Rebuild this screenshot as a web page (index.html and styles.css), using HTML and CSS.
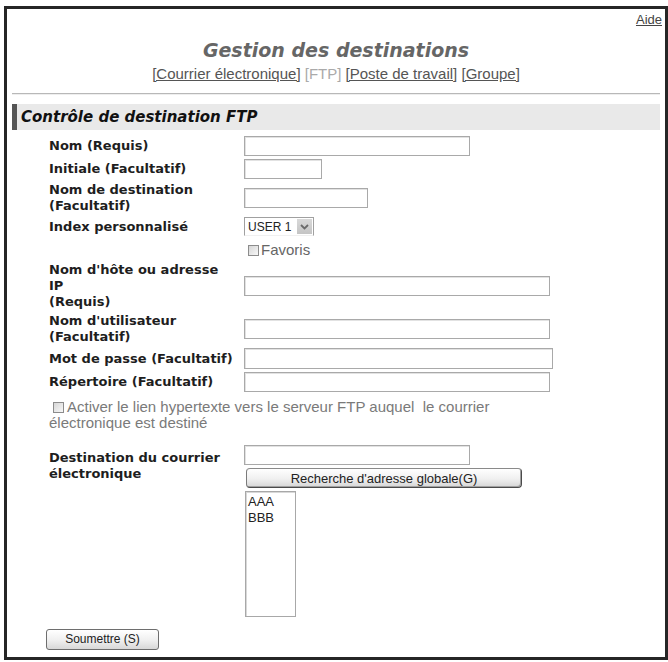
FILE: index.html
```html
<!DOCTYPE html>
<html lang="fr">
<head>
<meta charset="utf-8">
<title>Gestion des destinations</title>
<link rel="stylesheet" href="styles.css">
</head>
<body>
<div class="frame">
  <div class="help"><a href="#">Aide</a></div>
  <h1 class="title">Gestion des destinations</h1>
  <nav class="tabs">
    <a href="#">[Courrier électronique]</a> <span class="current">[FTP]</span> <a href="#">[Poste de travail]</a> <a href="#">[Groupe]</a>
  </nav>
  <hr class="rule">
  <h2 class="section">Contrôle de destination FTP</h2>
  <form class="form">
    <div class="grid">
      <label class="lbl">Nom (Requis)</label>
      <div class="ctl"><input type="text" class="field w226"></div>

      <label class="lbl">Initiale (Facultatif)</label>
      <div class="ctl"><input type="text" class="field w78"></div>

      <label class="lbl">Nom de destination<br>(Facultatif)</label>
      <div class="ctl"><input type="text" class="field w124"></div>

      <label class="lbl">Index personnalisé</label>
      <div class="ctl">
        <span class="select"><span class="select-val">USER 1</span><span class="select-btn"><svg width="9" height="6" viewBox="0 0 9 6"><path d="M1 1 L4.5 4.5 L8 1" fill="none" stroke="#6a6a6a" stroke-width="1.8"/></svg></span></span>
      </div>

      <div class="lbl"></div>
      <div class="ctl fav"><input type="checkbox" class="chk"><span class="light">Favoris</span></div>

      <label class="lbl">Nom d'hôte ou adresse<br>IP<br>(Requis)</label>
      <div class="ctl"><input type="text" class="field w306"></div>

      <label class="lbl">Nom d'utilisateur<br>(Facultatif)</label>
      <div class="ctl"><input type="text" class="field w306"></div>

      <label class="lbl">Mot de passe (Facultatif)</label>
      <div class="ctl"><input type="password" class="field w309 h21"></div>

      <label class="lbl">Répertoire (Facultatif)</label>
      <div class="ctl"><input type="text" class="field w306"></div>

      <p class="link-opt"><input type="checkbox" class="chk"><span>Activer le lien hypertexte vers le serveur FTP auquel&nbsp; le courrier électronique est destiné</span></p>

      <label class="lbl lbl-top">Destination du courrier<br>électronique</label>
      <div class="ctl stack">
        <input type="text" class="field w226">
        <button type="button" class="btn-search">Recherche d'adresse globale(G)</button>
        <div class="listbox">
          <div>AAA</div>
          <div>BBB</div>
        </div>
      </div>
    </div>
    <div class="submit-row"><button type="submit" class="btn-submit">Soumettre (S)</button></div>
  </form>
</div>
</body>
</html>
```
FILE: styles.css
```css
html, body {
  margin: 0;
  padding: 0;
  background: #fff;
}
body {
  font-family: "DejaVu Sans", Verdana, sans-serif;
  color: #1a1a1a;
}
.frame {
  box-sizing: border-box;
  width: 664px;
  height: 654px;
  margin: 6px 0 0 4px;
  border: 3px solid #262626;
}
.help {
  text-align: right;
  padding: 3px 3px 0 0;
  font-family: "Liberation Sans", Arial, sans-serif;
  font-size: 13px;
  line-height: 15px;
}
.help a {
  color: #444;
}
.title {
  margin: 12px 0 0 0;
  text-align: center;
  font-size: 19px;
  line-height: 22px;
  font-weight: bold;
  font-style: italic;
  color: #666;
}
.tabs {
  margin-top: 4px;
  text-align: center;
  font-family: "Liberation Sans", Arial, sans-serif;
  font-size: 15px;
  line-height: 17px;
  color: #555;
}
.tabs a {
  color: #555;
}
.tabs .current {
  color: #aaa;
}
.rule {
  margin: 11px 5px 0 5px;
  height: 0;
  border: 0;
  border-top: 1px solid #b8b8b8;
  border-bottom: 1px solid #eeeeee;
}
.section {
  margin: 9px 5px 0 5px;
  height: 26px;
  line-height: 26px;
  background: #e9e9e9;
  border-left: 5px solid #555;
  padding-left: 4px;
  font-size: 15px;
  font-weight: bold;
  font-style: italic;
  color: #111;
}
.form {
  margin: 0;
  padding: 6px 0 0 42px;
}
.grid {
  display: grid;
  grid-template-columns: 195px 1fr;
  row-gap: 3px;
  align-items: center;
}
.lbl {
  font-size: 13px;
  line-height: 16px;
  font-weight: bold;
  color: #1e1e1e;
}
.lbl-top {
  align-self: start;
  padding-top: 5px;
}
.ctl {
  display: flex;
  align-items: center;
}
.field {
  box-sizing: border-box;
  height: 20px;
  margin: 0;
  padding: 1px 3px;
  border: 1px solid #a9a9a9;
  box-shadow: inset 1px 1px 0 #e2e2e2;
  background: #fff;
  font: 12px "Liberation Sans", Arial, sans-serif;
}
.h21 { height: 21px; }
.w78 { width: 78px; }
.w124 { width: 124px; }
.w226 { width: 226px; }
.w306 { width: 306px; }
.w309 { width: 309px; }

.select {
  box-sizing: border-box;
  display: inline-flex;
  align-items: center;
  width: 70px;
  height: 19px;
  border: 1px solid #a0a0a0;
  border-bottom-color: #f0f0f0;
  padding-left: 3px;
  font-family: "Liberation Sans", Arial, sans-serif;
  font-size: 12px;
  color: #222;
}
.select-val {
  flex: 1;
}
.select-btn {
  display: flex;
  align-items: center;
  justify-content: center;
  width: 15px;
  height: 15px;
  margin-right: 1px;
  background: linear-gradient(#d9d9d9, #c4c4c4);
}

.chk {
  appearance: none;
  -webkit-appearance: none;
  box-sizing: border-box;
  width: 11px;
  height: 11px;
  margin: 0 2px 0 0;
  border: 1px solid #8c8c8c;
  background: linear-gradient(135deg, #d6d6d6, #f8f8f8);
  vertical-align: -1px;
}
.fav {
  padding: 3px 0 1px 4px;
}
.light,
.link-opt {
  font-family: "Liberation Sans", Arial, sans-serif;
  font-size: 15px;
  line-height: 16px;
  color: #666;
}
.link-opt {
  grid-column: 1 / 3;
  width: 500px;
  margin: 4px 0 11px 0;
  color: #7a7a7a;
}
.link-opt .chk {
  margin: 0 3px 0 4px;
}

.stack {
  flex-direction: column;
  align-items: flex-start;
  gap: 3px;
}
.btn-search {
  box-sizing: border-box;
  width: 276px;
  height: 20px;
  margin-left: 2px;
  padding: 0;
  border: 1px solid #4a4a4a;
  border-top-color: #8a8a8a;
  border-left-color: #7a7a7a;
  border-radius: 4px;
  background: linear-gradient(#ffffff, #f0f0f0 55%, #d6d6d6);
  box-shadow: inset -1px -1px 0 #a0a0a0;
  font: 13px "Liberation Sans", Arial, sans-serif;
  color: #222;
}
.listbox {
  box-sizing: border-box;
  width: 51px;
  height: 126px;
  margin-left: 1px;
  padding: 2px 2px;
  border: 1px solid #a8a8a8;
  box-shadow: inset 1px 1px 0 #d8d8d8;
  font: 13px/16px "Liberation Sans", Arial, sans-serif;
  color: #222;
}
.submit-row {
  margin-top: 11px;
  margin-left: -3px;
}
.btn-submit {
  box-sizing: border-box;
  width: 113px;
  height: 21px;
  padding: 0;
  border: 1px solid #6e6e6e;
  border-radius: 3px;
  background: linear-gradient(#ffffff, #efefef 55%, #d8d8d8);
  font: 12px "Liberation Sans", Arial, sans-serif;
  color: #222;
}
```
